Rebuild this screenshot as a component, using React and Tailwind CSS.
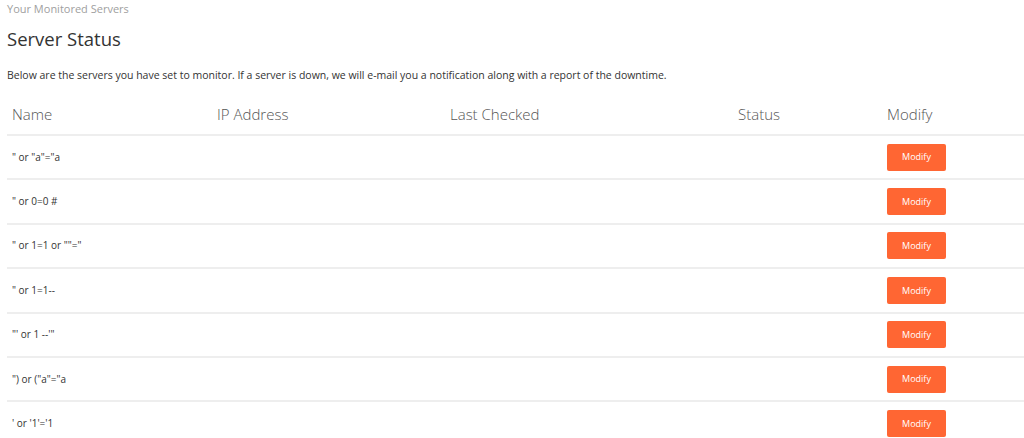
import React from "react";

const rows = [
  `" or "a"="a`,
  `" or 0=0 #`,
  `" or 1=1 or ""="`,
  `" or 1=1--`,
  `"' or 1 --'"`,
  `") or ("a"="a`,
  `' or '1'='1`,
];

export default function App() {
  return (
    <div className="w-[1024px] h-[438px] overflow-hidden bg-white pl-[7px] text-[#333]" style={{ fontFamily: '"Open Sans", "Liberation Sans", sans-serif' }}>
      <div className="pt-[2px] text-[11px] leading-[14px] text-[#a0a0a0]">Your Monitored Servers</div>
      <h1 className="mt-[11px] text-[18.5px] leading-[24px] text-[#333]">Server Status</h1>
      <p className="mt-[17px] text-[10.5px] leading-[14px] text-[#333]">
        Below are the servers you have set to monitor. If a server is down, we will e-mail you a notification along with a report of the downtime.
      </p>
      <div className="mt-[13px]">
        <div className="grid h-[41px] grid-cols-[205px_233px_288px_149px_1fr] items-center border-b-2 border-[#eeeeee] text-[15px] font-light text-[#555]">
          <div className="pl-[5px]">Name</div>
          <div className="pl-[5px]">IP Address</div>
          <div className="pl-[5px]">Last Checked</div>
          <div className="pl-[5px]">Status</div>
          <div className="pl-[5px]">Modify</div>
        </div>
        {rows.map((r, i) => (
          <div key={i} className="grid h-[44.4px] grid-cols-[205px_233px_288px_149px_1fr] items-center border-b-2 border-[#eeeeee] text-[10px] text-[#333]">
            <div className="pl-[5px]">{r}</div>
            <div></div>
            <div></div>
            <div></div>
            <div className="pl-[5px]">
              <button className="h-[27px] w-[59px] rounded-[2px] bg-[#ff6633] text-[9px] text-white">Modify</button>
            </div>
          </div>
        ))}
      </div>
    </div>
  );
}
